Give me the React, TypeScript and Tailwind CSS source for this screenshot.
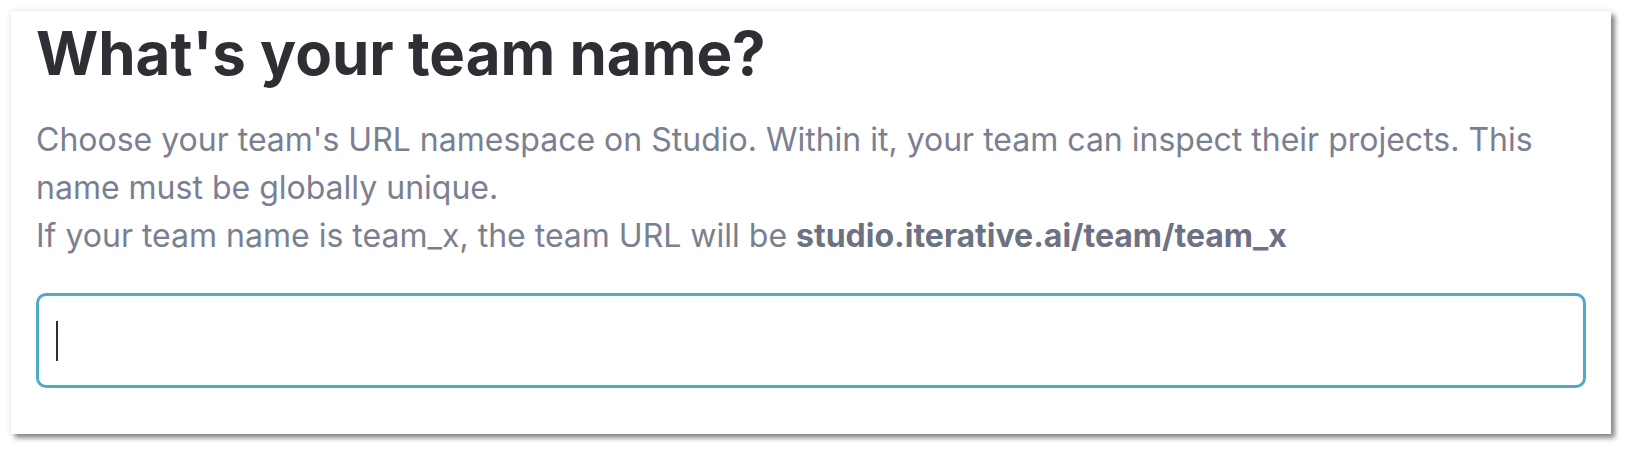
import React from 'react'

function App() {
  return (
    <div className="min-h-screen bg-white pt-[11px] pl-[11px]" style={{ fontFamily: 'Inter, "Noto Sans", sans-serif' }}>
      <div className="w-[1600px] h-[423px] bg-white px-[25px] pt-[6px] shadow-[0_0_6px_rgba(0,0,0,0.12),4px_4px_5px_rgba(0,0,0,0.45)]">
        <h1 className="text-[60px] leading-[1.2] font-bold text-[#2e2f35]">
          What's your team name?
        </h1>
        <p className="mt-[27px] text-[32px] leading-[48px] text-[#7a8091]">
          Choose your team's URL namespace on Studio. Within it, your team can inspect their projects. This
          name must be globally unique.
          <br />
          If your team name is team_x, the team URL will be{' '}
          <span className="font-bold text-[#6c7282]">studio.iterative.ai/team/team_x</span>
        </p>
        <div className="mt-[33px] h-[95px] w-full rounded-[10px] border-[3px] border-[#4fabc5] flex items-center pl-[17px]">
          <div className="w-[2px] h-[40px] bg-[#2e2f35]" />
        </div>
      </div>
    </div>
  )
}

export default App
